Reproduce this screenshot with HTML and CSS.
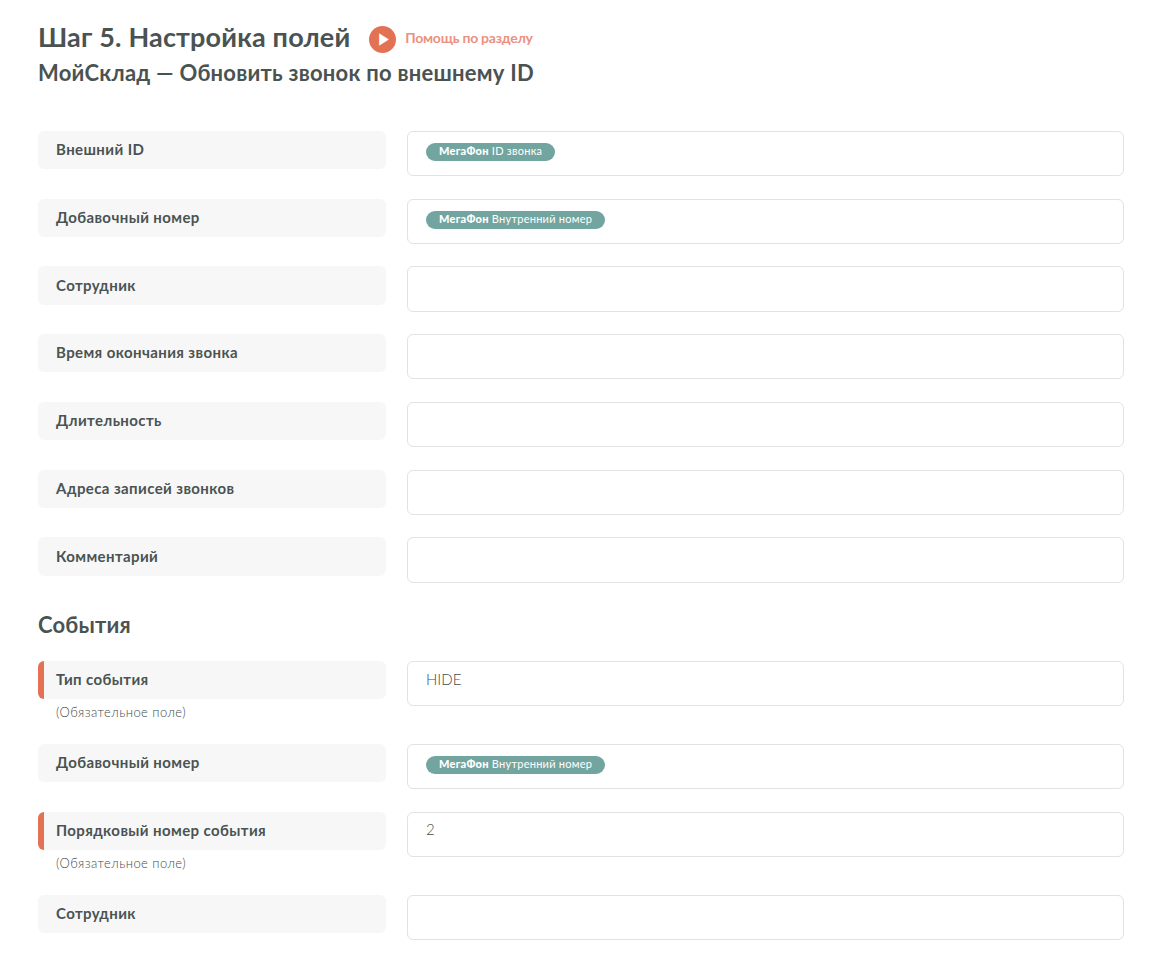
FILE: index.html
```html
<!DOCTYPE html>
<html lang="ru">
<head>
<meta charset="utf-8">
<title>Шаг 5. Настройка полей</title>
<link rel="stylesheet" href="styles.css">
</head>
<body>
<main class="page">
  <header class="head">
    <div class="title-line">
      <h1 class="title">Шаг 5. Настройка полей</h1>
      <a class="help" href="#">
        <svg class="help-icon" viewBox="0 0 27 27" width="27" height="27"><circle cx="13.5" cy="13.5" r="13.5" fill="#e37254"/><path d="M10.4 7.8v11.4l9-5.7z" fill="#fff" stroke="#fff" stroke-width="0.6" stroke-linejoin="round"/></svg>
        <span>Помощь по разделу</span>
      </a>
    </div>
    <h2 class="subtitle">МойСклад — Обновить звонок по внешнему ID</h2>
  </header>

  <section class="rows">
    <div class="row"><div class="label-col"><div class="label">Внешний ID</div></div><div class="field"><span class="tag"><b>МегаФон</b> ID звонка</span></div></div>
    <div class="row"><div class="label-col"><div class="label">Добавочный номер</div></div><div class="field"><span class="tag"><b>МегаФон</b> Внутренний номер</span></div></div>
    <div class="row"><div class="label-col"><div class="label">Сотрудник</div></div><div class="field"></div></div>
    <div class="row"><div class="label-col"><div class="label">Время окончания звонка</div></div><div class="field"></div></div>
    <div class="row"><div class="label-col"><div class="label">Длительность</div></div><div class="field"></div></div>
    <div class="row"><div class="label-col"><div class="label">Адреса записей звонков</div></div><div class="field"></div></div>
    <div class="row"><div class="label-col"><div class="label">Комментарий</div></div><div class="field"></div></div>
  </section>

  <h3 class="section-title">События</h3>

  <section class="rows">
    <div class="row"><div class="label-col"><div class="label required">Тип события</div><div class="note">(Обязательное поле)</div></div><div class="field value">HIDE</div></div>
    <div class="row"><div class="label-col"><div class="label">Добавочный номер</div></div><div class="field"><span class="tag"><b>МегаФон</b> Внутренний номер</span></div></div>
    <div class="row"><div class="label-col"><div class="label required">Порядковый номер события</div><div class="note">(Обязательное поле)</div></div><div class="field value">2</div></div>
    <div class="row"><div class="label-col"><div class="label">Сотрудник</div></div><div class="field"></div></div>
  </section>
</main>
</body>
</html>
```

FILE: styles.css
```css
* { box-sizing: border-box; }
html, body { margin: 0; padding: 0; background: #fff; }
body {
  font-family: "Lato", "Noto Sans", sans-serif;
  color: #4a5352;
  height: 962px;
  overflow: hidden;
}
.page { padding: 21px 43px 0 38px; }
.title-line { display: flex; align-items: center; height: 32px; }
.title { margin: 0; font-size: 27px; line-height: 32px; font-weight: 700; letter-spacing: 0.17px; }
.help { display: flex; align-items: center; margin: 2px 0 0 19px; color: #ea9180; font-size: 14px; font-weight: 700; letter-spacing: -0.25px; text-decoration: none; }
.help span { margin-top: -1px; }
.help-icon { margin: 3px 9px 0 0; }
.subtitle { margin: 5px 0 0; font-size: 22px; line-height: 30px; font-weight: 700; letter-spacing: 0.23px; }
.rows { display: flex; flex-direction: column; gap: 22.5625px; margin-top: 42.9px; }
.row { display: flex; gap: 21px; }
.label-col { width: 348px; flex: none; }
.label {
  height: 38.2px;
  padding: 0.2px 18px 0;
  background: #f7f7f7;
  border-radius: 6px;
  font-size: 15px;
  font-weight: 700;
  line-height: 36px;
  letter-spacing: 0.4px;
}
.label.required { border-left: 6px solid #e37254; padding-left: 12px; }
.note { margin-top: 5px; padding-left: 18px; height: 17.25px; font-size: 13px; font-weight: 300; line-height: 17px; letter-spacing: 0.45px; color: #434c4b; }
.field {
  flex: 1;
  height: 45.2px;
  padding: 11px 18px 0;
  border: 1px solid #e2e2e2;
  border-radius: 6px;
  background: #fff;
}
.field.value { padding-top: 6.6px; font-size: 15px; font-weight: 300; line-height: 20px; color: #434c4b; }
.tag {
  display: inline-block;
  height: 18px;
  padding: 0 13px;
  border-radius: 9px;
  background: #73a5a0;
  color: #fff;
  font-size: 11px;
  line-height: 16px;
  letter-spacing: 0.25px;
  vertical-align: top;
  white-space: nowrap;
}
.tag b { font-weight: 900; }
.section-title { margin: 28px 0 0; font-size: 22px; line-height: 28px; font-weight: 700; letter-spacing: 0.2px; }
.section-title + .rows { margin-top: 22.4px; }
```
